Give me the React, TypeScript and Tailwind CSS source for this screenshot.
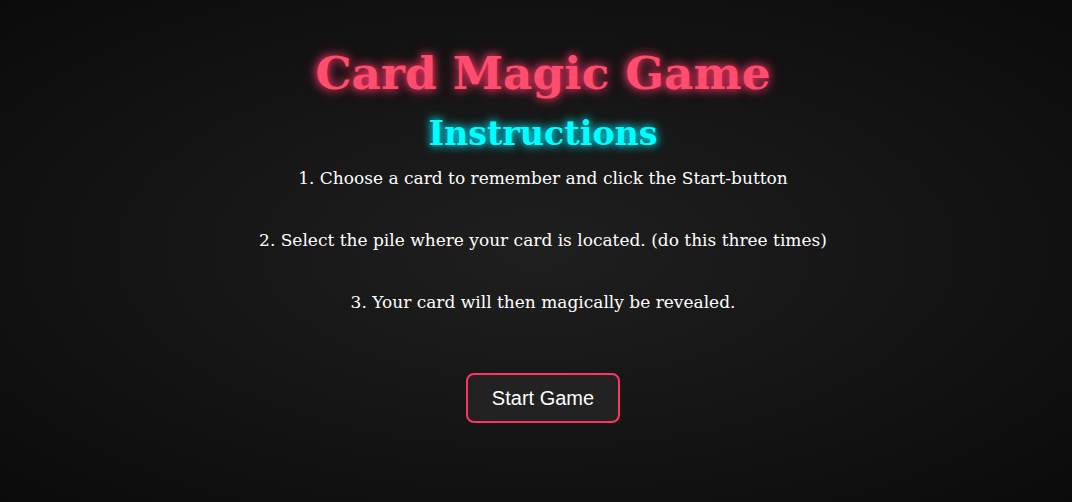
export default function App() {
  return (
    <div className="min-h-[502px] w-full pl-[14px] bg-[radial-gradient(ellipse_at_center,#1f1f1f_0%,#151515_50%,#0b0b0b_100%)] flex flex-col items-center text-center font-['DejaVu_Serif',serif] text-white">
      <h1 className="mt-[43px] text-[45.5px] leading-[60px] font-bold text-[#ff4d6d] [text-shadow:0_0_8px_#ff3366,0_0_14px_rgba(255,51,102,0.6)]">
        Card Magic Game
      </h1>
      <h2 className="mt-[9px] text-[33.3px] leading-[44px] font-bold text-[#00ffff] [text-shadow:0_0_8px_#00e5ff,0_0_12px_rgba(0,255,255,0.5)]">
        Instructions
      </h2>
      <div className="mt-[10px] flex flex-col gap-[38px] text-[17px] leading-[24px]">
        <p>1. Choose a card to remember and click the Start-button</p>
        <p>2. Select the pile where your card is located. (do this three times)</p>
        <p>3. Your card will then magically be revealed.</p>
      </div>
      <button className="mt-[59px] w-[154px] h-[50px] rounded-lg border-2 border-[#ff3366] bg-[#222222] font-['Liberation_Sans',Arial,sans-serif] text-[20px] text-white">
        Start Game
      </button>
    </div>
  );
}
